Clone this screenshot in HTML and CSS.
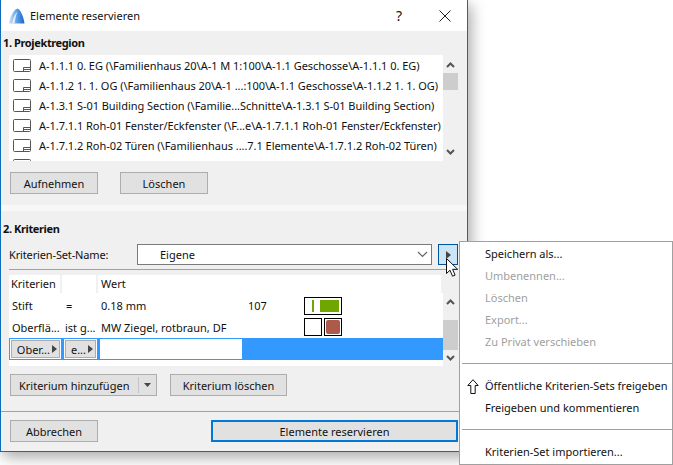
FILE: index.html
```html
<!DOCTYPE html>
<html lang="de">
<head>
<meta charset="utf-8">
<title>Elemente reservieren</title>
<link rel="stylesheet" href="styles.css">
</head>
<body>
<main class="dialog">
  <header class="titlebar">
    <svg class="logo" width="16" height="16" viewBox="0 0 16 16"><defs><linearGradient id="lg" x1="0" y1="0" x2="1" y2="0"><stop offset="0" stop-color="#cfe3f9"/><stop offset=".5" stop-color="#5aa2ec"/><stop offset="1" stop-color="#1c62c4"/></linearGradient></defs><path d="M0 15.500C1 9 4 2 8.500.500 12 2 14.500 9 15.500 15.500Z" fill="url(#lg)"/><path d="M3 15.500C4 10 6 6 8.500 3.500 7 7 6 11 5.500 15.500Z" fill="#e6f0fb"/></svg>
    <span class="title">Elemente reservieren</span>
    <span class="help">?</span>
    <svg class="close" width="12" height="12" viewBox="0 0 12 12"><path d="M.5.500l11 11M11.500.500l-11 11" stroke="#222" fill="none"/></svg>
  </header>
  <section class="region">
    <h2>1. Projektregion</h2>
    <div class="listwrap">
      <ul class="list">
        <li><svg class="view" width="18" height="13" viewBox="0 0 18 13"><path d="M1.500.500h15a1 1 0 0 1 1 1v10a1 1 0 0 1-1 1h-15a1 1 0 0 1-1-1v-10a1 1 0 0 1 1-1zM10.500 12.500v-4h7M11 10.500h6" fill="#fff" stroke="#555"/></svg><span>A-1.1.1 0. EG (\Familienhaus 20\A-1 M 1:100\A-1.1 Geschosse\A-1.1.1 0. EG)</span></li>
        <li><svg class="view" width="18" height="13" viewBox="0 0 18 13"><path d="M1.500.500h15a1 1 0 0 1 1 1v10a1 1 0 0 1-1 1h-15a1 1 0 0 1-1-1v-10a1 1 0 0 1 1-1zM10.500 12.500v-4h7M11 10.500h6" fill="#fff" stroke="#555"/></svg><span>A-1.1.2 1. 1. OG (\Familienhaus 20\A-1 ...:100\A-1.1 Geschosse\A-1.1.2 1. 1. OG)</span></li>
        <li><svg class="view" width="18" height="13" viewBox="0 0 18 13"><path d="M1.500.500h15a1 1 0 0 1 1 1v10a1 1 0 0 1-1 1h-15a1 1 0 0 1-1-1v-10a1 1 0 0 1 1-1zM10.500 12.500v-4h7M11 10.500h6" fill="#fff" stroke="#555"/></svg><span>A-1.3.1 S-01 Building Section (\Familie...Schnitte\A-1.3.1 S-01 Building Section)</span></li>
        <li><svg class="view" width="18" height="13" viewBox="0 0 18 13"><path d="M1.500.500h15a1 1 0 0 1 1 1v10a1 1 0 0 1-1 1h-15a1 1 0 0 1-1-1v-10a1 1 0 0 1 1-1zM10.500 12.500v-4h7M11 10.500h6" fill="#fff" stroke="#555"/></svg><span>A-1.7.1.1 Roh-01 Fenster/Eckfenster (\F...e\A-1.7.1.1 Roh-01 Fenster/Eckfenster)</span></li>
        <li><svg class="view" width="18" height="13" viewBox="0 0 18 13"><path d="M1.500.500h15a1 1 0 0 1 1 1v10a1 1 0 0 1-1 1h-15a1 1 0 0 1-1-1v-10a1 1 0 0 1 1-1zM10.500 12.500v-4h7M11 10.500h6" fill="#fff" stroke="#555"/></svg><span>A-1.7.1.2 Roh-02 Türen (\Familienhaus ....7.1 Elemente\A-1.7.1.2 Roh-02 Türen)</span></li>
        <li><svg class="view" width="18" height="13" viewBox="0 0 18 13"><path d="M1.500.500h15a1 1 0 0 1 1 1v10a1 1 0 0 1-1 1h-15a1 1 0 0 1-1-1v-10a1 1 0 0 1 1-1z" fill="#fff" stroke="#555"/></svg></li>
      </ul>
      <div class="scroll scroll-list">
        <svg class="arrow" width="9" height="6" viewBox="0 0 9 6"><path d="M1 5l3.500-3.500L8 5" fill="none" stroke="#555" stroke-width="2"/></svg>
        <div class="thumb thumb-list"></div>
        <div class="spacer"></div>
        <svg class="arrow" width="9" height="6" viewBox="0 0 9 6"><path d="M1 1l3.500 3.500L8 1" fill="none" stroke="#555" stroke-width="2"/></svg>
      </div>
    </div>
    <div class="btnrow btnrow-list">
      <button class="btn w88">Aufnehmen</button>
      <button class="btn w88">Löschen</button>
    </div>
  </section>
  <div class="band"></div>
  <section class="criteria">
    <h2>2. Kriterien</h2>
    <div class="setrow">
      <label class="setlabel">Kriterien-Set-Name:</label>
      <div class="combo"><span>Eigene</span><svg width="11" height="7" viewBox="0 0 11 7"><path d="M1 1l4.500 4.500L10 1" fill="none" stroke="#666" stroke-width="1.200"/></svg></div>
      <button class="morebtn"><svg width="5" height="8" viewBox="0 0 5 8"><path d="M0 0l5 4-5 4z" fill="#444"/></svg></button>
    </div>
    <div class="rule"></div>
    <div class="tablewrap">
      <div class="table">
        <div class="thead">
          <span class="th c1">Kriterien</span><span class="th c2"></span><span class="th c3">Wert</span>
        </div>
        <div class="tr tr1">
          <span class="c1 cell">Stift</span><span class="c2 cell eq">=</span><span class="c3 cell wert">0.18 mm</span><span class="num">107</span>
          <span class="swatch wide"><i class="pen"></i><i class="fillgreen"></i></span>
        </div>
        <div class="tr tr2">
          <span class="c1 cell">Oberflä...</span><span class="c2 cell">ist g...</span><span class="c3 cell wert">MW Ziegel, rotbraun, DF</span><span class="num"></span>
          <span class="swatches"><span class="swatch sq"></span><span class="swatch sq"><i class="fillred"></i></span></span>
        </div>
        <div class="tr trsel">
          <span class="selcell s1"><span class="minibtn">Ober...<svg width="5" height="8" viewBox="0 0 5 8"><path d="M0 0l5 4-5 4z" fill="#444"/></svg></span></span>
          <span class="selcell s2"><span class="minibtn">e...<svg width="5" height="8" viewBox="0 0 5 8"><path d="M0 0l5 4-5 4z" fill="#444"/></svg></span></span>
          <span class="selinput"></span>
        </div>
      </div>
      <div class="scroll scroll-table">
        <svg class="arrow" width="9" height="6" viewBox="0 0 9 6"><path d="M1 5l3.500-3.500L8 5" fill="none" stroke="#555" stroke-width="2"/></svg>
        <div class="thumb thumb-table"></div>
        <svg class="arrow" width="9" height="6" viewBox="0 0 9 6"><path d="M1 1l3.500 3.500L8 1" fill="none" stroke="#555" stroke-width="2"/></svg>
      </div>
    </div>
    <div class="btnrow btnrow-table">
      <div class="btn split"><span class="splitlabel">Kriterium hinzufügen</span><span class="splitarrow"><svg width="7" height="4" viewBox="0 0 7 4"><path d="M0 0h7L3.500 4z" fill="#444"/></svg></span></div>
      <button class="btn w117">Kriterium löschen</button>
    </div>
  </section>
  <footer class="foot">
    <button class="btn w88">Abbrechen</button>
    <button class="btn primary">Elemente reservieren</button>
  </footer>
</main>

<nav class="menu">
  <div class="item">Speichern als...</div>
  <div class="item off">Umbenennen...</div>
  <div class="item off">Löschen</div>
  <div class="item off">Export...</div>
  <div class="item off">Zu Privat verschieben</div>
  <div class="sep"></div>
  <div class="item"><svg class="share" width="12" height="15" viewBox="0 0 12 15"><path d="M6 .700L.800 6.500h3v8h4.400v-8h3z" fill="#fff" stroke="#111"/></svg>Öffentliche Kriterien-Sets freigeben</div>
  <div class="item">Freigeben und kommentieren</div>
  <div class="sep"></div>
  <div class="item">Kriterien-Set importieren...</div>
</nav>

<svg class="cursor" width="13" height="20" viewBox="0 0 13 20"><path d="M.500.500v15l3.500-3.300 2.500 6 2.600-1.100-2.500-5.800h5z" fill="#fff" stroke="#111" stroke-linejoin="round"/></svg>
</body>
</html>
```

FILE: styles.css
```css
* { box-sizing: border-box; }
html, body { margin: 0; padding: 0; }
body {
  width: 673px; height: 465px; overflow: hidden; position: relative; background: #fff;
  font-family: "Noto Sans", "Open Sans", sans-serif; font-size: 11px; color: #111;
}
.dialog {
  width: 468px; height: 452px; background: #f0f0f0;
  border: 1px solid #0f6cbd; border-top: 0;
  box-shadow: 3px 5px 14px rgba(0,0,0,.35);
  display: flex; flex-direction: column;
}
.titlebar { height: 31px; background: #fff; display: flex; align-items: center; padding-left: 8px; flex: none; }
.logo { margin-right: 5px; }
.title { font-size: 11px; flex: 1; }
.help { font-size: 14px; width: 14px; margin-right: 29px; }
.close { margin-right: 16px; }
h2 { margin: 0; font-size: 11px; font-weight: 700; line-height: 15px; letter-spacing: -.38px; }
.region { padding: 4px 9px 0 2px; height: 174px; flex: none; }
.listwrap { display: flex; margin: 5px 0 0 6px; height: 106px; }
.list { list-style: none; margin: 0; padding: 0; width: 434px; height: 106px; overflow: hidden; background: #fff; letter-spacing: -.04px; }
.list li { height: 20px; display: flex; align-items: center; white-space: nowrap; padding-left: 4px; }
.view { flex: none; margin-right: 8px; }
.scroll { width: 15px; display: flex; flex-direction: column; align-items: center; }
.scroll-list { height: 106px; padding: 7px 0 6px; }
.arrow { flex: none; }
.thumb { background: #cdcdcd; width: 15px; flex: none; }
.thumb-list { height: 17px; margin-top: 5px; }
.spacer { flex: 1; }
.btnrow { display: flex; }
.btnrow-list { gap: 22px; margin: 11px 0 0 7px; }
.btn {
  height: 22px; border: 1px solid #adadad; background: #e1e1e1; color: #111;
  font: inherit; padding: 0; display: flex; align-items: center; justify-content: center;
}
.w88 { width: 88px; }
.w117 { width: 117px; }
.band { height: 6px; background: #f8f8f8; flex: none; }
.criteria { height: 200px; padding: 10px 9px 0 2px; flex: none; }
.setrow { display: flex; align-items: center; margin: 8px 0 0 6px; height: 21px; }
.setlabel { width: 128px; letter-spacing: -.14px; }
.combo {
  width: 295px; height: 21px; border: 1px solid #7a7a7a; background: #fff;
  display: flex; align-items: center; justify-content: space-between; padding: 0 3px 0 22px;
}
.morebtn {
  width: 20px; height: 21px; margin-left: 6px; border: 1px solid #005499; background: #cce4f7;
  padding: 0; display: flex; align-items: center; justify-content: center;
}
.rule { height: 1px; background: #a0a0a0; margin: 4px 0 5px 6px; }
.tablewrap { display: flex; margin-left: 6px; height: 91px; }
.table { width: 434px; height: 91px; background: linear-gradient(#f0f0f0 0 0) right top / 2px 18px no-repeat, #fff; }
.thead { display: flex; height: 18px; }
.th { height: 18px; line-height: 18px; padding-left: 2px; border-right: 2px solid #f0f0f0; }
.c1 { width: 53px; flex: none; }
.c2 { width: 36px; flex: none; }
.c3 { flex: none; }
.th.c3 { border-right: 0; padding-left: 3px; }
.tr { display: flex; align-items: center; }
.tr1 { height: 21px; margin-top: 2px; }
.tr2 { height: 22px; }
.cell { padding-left: 3px; white-space: nowrap; }
.eq { padding-left: 4px; }
.wert { width: 150px; padding-left: 3px; }
.num { width: 56px; }
.swatch { border: 1px solid #000; height: 18px; background: #fff; display: flex; align-items: center; flex: none; }
.wide { width: 38px; padding: 0 2px; }
.swatches { display: flex; gap: 2px; }
.sq { width: 18px; justify-content: center; }
.pen { width: 2px; height: 12px; background: #6fa600; margin-left: 5px; }
.fillgreen { width: 20px; height: 12px; background: #6fa600; margin-left: 6px; }
.fillred { width: 14px; height: 14px; background: #ad5a4a; border-radius: 2px; }
.trsel { height: 22px; background: #3399ff; }
.selcell { height: 22px; border: 1px solid #3399ff; background: #fff; display: flex; align-items: center; flex: none; padding: 0 1px; }
.s1 { width: 53px; }
.s2 { width: 35px; margin-left: 1px; }
.minibtn {
  width: 100%; height: 18px; background: #e1e1e1; border: 1px solid #adadad;
  display: flex; align-items: center; justify-content: flex-end; gap: 2px; padding-right: 2px; white-space: nowrap;
}
.selinput { width: 142px; height: 20px; background: #fff; margin-left: 2px; }
.scroll-table { padding-top: 24px; padding-bottom: 5px; height: 91px; }
.thumb-table { height: 30px; margin: 15px 0 5px; }
.btnrow-table { gap: 13px; margin: 8px 0 0 7px; }
.split { width: 147px; justify-content: flex-start; padding-left: 8px; }
.splitlabel { width: 123px; }
.splitarrow { border-left: 1px solid #c4c4c4; height: 16px; width: 18px; display: flex; align-items: center; justify-content: center; }
.foot {
  flex: 1; border-top: 1px solid #a0a0a0; display: flex; gap: 113px;
  padding: 8px 0 0 9px;
}
.primary { width: 247px; border: 2px solid #0078d7; }
.menu {
  position: absolute; left: 459px; top: 241px; width: 214px; height: 224px;
  background: #fff; border: 1px solid #a0a0a0; padding-top: 1px;
}
.item { height: 22px; line-height: 22px; padding-left: 25px; position: relative; white-space: nowrap; }
.off { color: #a0a0a0; }
.sep { height: 1px; background: #a0a0a0; margin: 10px 0 11px 2px; }
.share { position: absolute; left: 7px; top: 4px; }
.cursor { position: absolute; left: 446px; top: 258px; }
```
